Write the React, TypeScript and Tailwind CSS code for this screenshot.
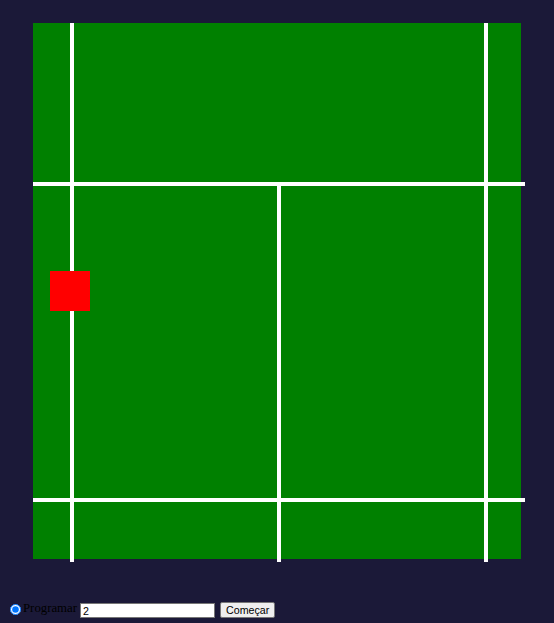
export default function App() {
  return (
    <div className="min-h-screen h-[623px] bg-[#1b1938] pt-[23px] font-['Liberation_Serif',serif] text-black">
      {/* quadra */}
      <div className="relative ml-[33px] h-[536px] w-[488px] bg-[#008000]">
        <div className="absolute left-[37px] top-0 h-[539px] w-[4px] bg-white" />
        <div className="absolute left-[451px] top-0 h-[539px] w-[4px] bg-white" />
        <div className="absolute left-[244px] top-[159px] h-[380px] w-[4px] bg-white" />
        <div className="absolute left-0 top-[159px] h-[4px] w-[492px] bg-white" />
        <div className="absolute left-0 top-[475px] h-[4px] w-[492px] bg-white" />
        {/* jogador */}
        <div className="absolute left-[17px] top-[248px] h-[40px] w-[40px] bg-[#ff0000]" />
      </div>

      {/* controles */}
      <form className="mt-[42px] flex items-start" onSubmit={(e) => e.preventDefault()}>
        <input
          type="radio"
          defaultChecked
          className="ml-[10px] mr-[2px] mt-[3px] h-[11px] w-[11px] accent-[#0075ff]"
        />
        <span className="text-[12.8px] leading-[15px]">Programar</span>
        <input
          type="text"
          defaultValue="2"
          className="ml-[3px] mt-[2px] h-[15px] w-[135px] border border-[#767676] bg-white px-[2px] font-['Liberation_Sans',Arial,sans-serif] text-[10.67px] leading-[13px] text-black outline-none"
        />
        <button
          type="submit"
          className="ml-[5px] mt-[1px] h-[16px] rounded-[2px] border border-[#767676] bg-[#efefef] px-[5px] font-['Liberation_Sans',Arial,sans-serif] text-[10.67px] leading-[14px] text-black"
        >
          Começar
        </button>
      </form>
    </div>
  );
}
